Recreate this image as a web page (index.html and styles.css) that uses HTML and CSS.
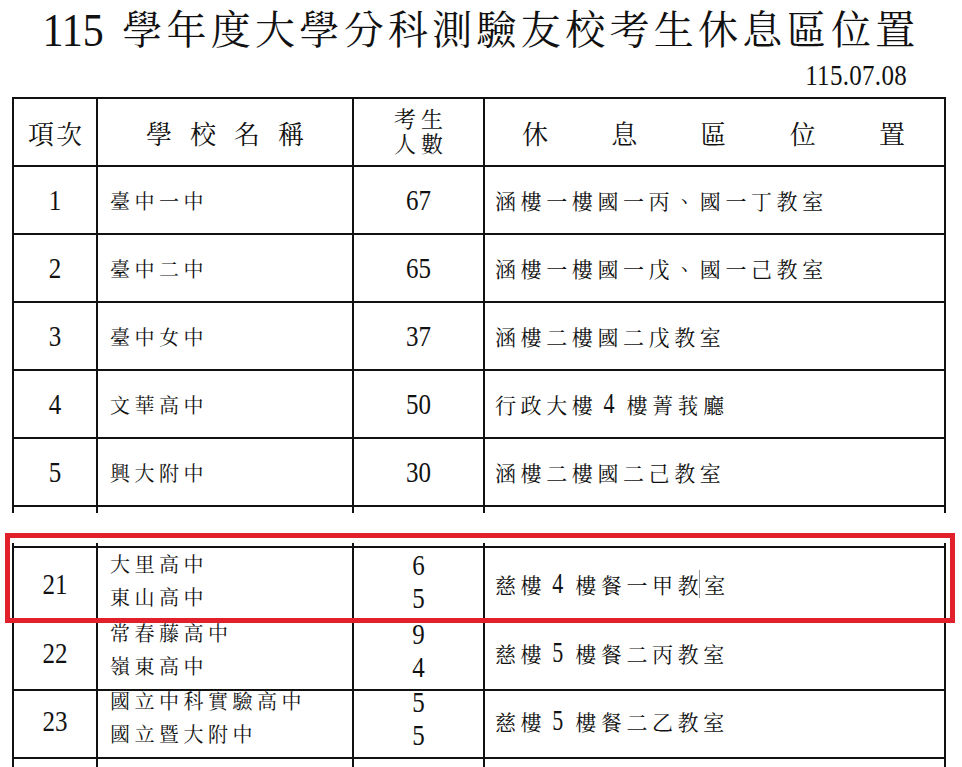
FILE: index.html
```html
<!DOCTYPE html>
<html lang="zh-Hant">
<head>
<meta charset="utf-8">
<title>115學年度大學分科測驗友校考生休息區位置</title>
<link rel="stylesheet" href="styles.css">
</head>
<body>
<div class="page">
  <h1 class="title"><span class="num">115</span> 學年度大學分科測驗友校考生休息區位置</h1>
  <div class="date"><span class="num">115.07.08</span></div>

  <div class="table">
    <div class="row head">
      <div class="cell c-idx"><span class="h-idx">項次</span></div>
      <div class="cell c-name"><span class="h-name">學校名稱</span></div>
      <div class="cell c-cnt"><span class="h-cnt">考生<br>人數</span></div>
      <div class="cell c-loc h-loc"><span>休</span><span>息</span><span>區</span><span>位</span><span>置</span></div>
    </div>
    <div class="row">
      <div class="cell c-idx"><span class="num">1</span></div>
      <div class="cell c-name">臺中一中</div>
      <div class="cell c-cnt"><span class="num">67</span></div>
      <div class="cell c-loc">涵樓一樓國一丙、國一丁教室</div>
    </div>
    <div class="row">
      <div class="cell c-idx"><span class="num">2</span></div>
      <div class="cell c-name">臺中二中</div>
      <div class="cell c-cnt"><span class="num">65</span></div>
      <div class="cell c-loc">涵樓一樓國一戊、國一己教室</div>
    </div>
    <div class="row">
      <div class="cell c-idx"><span class="num">3</span></div>
      <div class="cell c-name">臺中女中</div>
      <div class="cell c-cnt"><span class="num">37</span></div>
      <div class="cell c-loc">涵樓二樓國二戊教室</div>
    </div>
    <div class="row">
      <div class="cell c-idx"><span class="num">4</span></div>
      <div class="cell c-name">文華高中</div>
      <div class="cell c-cnt"><span class="num">50</span></div>
      <div class="cell c-loc">行政大樓<span class="num">4</span>樓菁莪廳</div>
    </div>
    <div class="row">
      <div class="cell c-idx"><span class="num">5</span></div>
      <div class="cell c-name">興大附中</div>
      <div class="cell c-cnt"><span class="num">30</span></div>
      <div class="cell c-loc">涵樓二樓國二己教室</div>
    </div>
    <div class="row stub stub-bottom">
      <div class="cell"></div><div class="cell"></div><div class="cell"></div><div class="cell"></div>
    </div>
  </div>

  <div class="table table-cont">
    <div class="row stub stub-top">
      <div class="cell"></div><div class="cell"></div><div class="cell"></div><div class="cell"></div>
    </div>
    <div class="row first double">
      <div class="cell c-idx"><span class="num">21</span></div>
      <div class="cell c-name lines">大里高中<br>東山高中</div>
      <div class="cell c-cnt lines"><span class="num">6</span><br><span class="num">5</span></div>
      <div class="cell c-loc">慈樓<span class="num">4</span>樓餐一甲教<span class="caret"></span>室</div>
    </div>
    <div class="row double">
      <div class="cell c-idx"><span class="num">22</span></div>
      <div class="cell c-name lines">常春藤高中<br>嶺東高中</div>
      <div class="cell c-cnt lines"><span class="num">9</span><br><span class="num">4</span></div>
      <div class="cell c-loc">慈樓<span class="num">5</span>樓餐二丙教室</div>
    </div>
    <div class="row double">
      <div class="cell c-idx"><span class="num">23</span></div>
      <div class="cell c-name lines">國立中科實驗高中<br>國立暨大附中</div>
      <div class="cell c-cnt lines"><span class="num">5</span><br><span class="num">5</span></div>
      <div class="cell c-loc">慈樓<span class="num">5</span>樓餐二乙教室</div>
    </div>
    <div class="row stub stub-end">
      <div class="cell"></div><div class="cell"></div><div class="cell"></div><div class="cell"></div>
    </div>
  </div>

  <div class="highlight"></div>
</div>
</body>
</html>
```

FILE: styles.css
```css
html, body {
  margin: 0;
  padding: 0;
  background: #fff;
}

body {
  font-family: "Liberation Serif", "Noto Serif CJK TC", "Noto Sans CJK TC", serif;
  color: #111;
  overflow: hidden;
}

.page {
  position: relative;
  width: 962px;
  height: 767px;
  overflow: hidden;
}

.num {
  display: inline-block;
  transform: scaleY(1.22);
}

.title {
  margin: 0;
  height: 60px;
  line-height: 60px;
  font-size: 40px;
  font-weight: 400;
  letter-spacing: 4.3px;
  text-align: center;
  white-space: nowrap;
}

.title .num {
  font-size: 42px;
  letter-spacing: 0;
  margin-right: 4px;
  transform: scaleY(1.12);
}

.date {
  height: 30px;
  line-height: 30px;
  text-align: right;
  padding-right: 55px;
  font-size: 25px;
}

.date .num {
  letter-spacing: 0.3px;
  transform: scaleY(1.2);
}

.table {
  margin-left: 12px;
  margin-top: 7px;
  width: 934px;
  box-sizing: border-box;
  border-top: 2px solid #111;
  border-left: 2px solid #111;
}

.table-cont {
  margin-top: 30px;
  border-top: 0;
}

.row {
  display: grid;
  grid-template-columns: 84px 256px 131px 461px;
  height: 68px;
}

.cell {
  box-sizing: border-box;
  border-right: 2px solid #111;
  border-bottom: 2px solid #111;
  display: flex;
  align-items: center;
  white-space: nowrap;
}

.stub .cell {
  border-bottom: 0;
}

.stub-bottom { height: 6px; }
.stub-top { height: 3px; }
.stub-end { height: 20px; }

.first {
  height: 71px;
}

.first .cell {
  border-top: 2px solid #111;
}

.c-idx,
.c-cnt {
  justify-content: center;
  font-size: 25px;
}

.c-name {
  padding-left: 12px;
  font-size: 20px;
  letter-spacing: 4.5px;
}

.c-loc {
  padding-left: 10px;
  font-size: 21px;
  letter-spacing: 4.6px;
}

.c-loc .num {
  font-size: 22px;
  letter-spacing: 0;
  margin: 0 12px 0 6px;
  transform: scaleY(1.3);
}

.lines {
  line-height: 33px;
}

.c-name.lines {
  padding-bottom: 4px;
}

.c-cnt.lines {
  flex-direction: column;
  line-height: 33px;
  padding-bottom: 6px;
}

.c-cnt.lines br {
  display: none;
}

.head .cell {
  font-size: 26px;
}

.h-idx {
  letter-spacing: 2px;
  padding-left: 2px;
}

.h-name {
  letter-spacing: 18px;
  padding-left: 18px;
}

.head .c-name {
  padding-left: 0;
  justify-content: center;
}

.h-cnt {
  font-size: 22px;
  line-height: 25px;
  letter-spacing: 5px;
  padding-left: 5px;
  text-align: center;
}

.h-loc {
  justify-content: space-between;
  padding: 0 39px 0 37px;
  letter-spacing: 0;
}

.caret {
  display: inline-block;
  width: 0;
  height: 28px;
  border-left: 1px solid #9a9a9a;
  vertical-align: middle;
  margin-left: -4px;
  margin-right: 4px;
}

.highlight {
  position: absolute;
  left: 5px;
  top: 533px;
  width: 950px;
  height: 90px;
  box-sizing: border-box;
  border: 5px solid #e2202c;
}
```
